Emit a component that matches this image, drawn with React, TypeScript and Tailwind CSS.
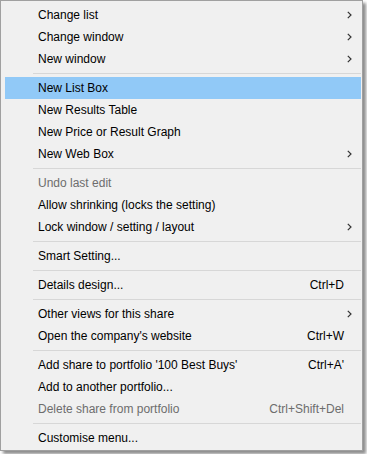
import React from "react";

type Item =
  | { sep: true }
  | { sep?: false; label: string; shortcut?: string; sub?: boolean; disabled?: boolean; active?: boolean };

const items: Item[] = [
  { label: "Change list", sub: true },
  { label: "Change window", sub: true },
  { label: "New window", sub: true },
  { sep: true },
  { label: "New List Box", active: true },
  { label: "New Results Table" },
  { label: "New Price or Result Graph" },
  { label: "New Web Box", sub: true },
  { sep: true },
  { label: "Undo last edit", disabled: true },
  { label: "Allow shrinking (locks the setting)" },
  { label: "Lock window / setting / layout", sub: true },
  { sep: true },
  { label: "Smart Setting..." },
  { sep: true },
  { label: "Details design...", shortcut: "Ctrl+D" },
  { sep: true },
  { label: "Other views for this share", sub: true },
  { label: "Open the company's website", shortcut: "Ctrl+W" },
  { sep: true },
  { label: "Add share to portfolio '100 Best Buys'", shortcut: "Ctrl+A'" },
  { label: "Add to another portfolio..." },
  { label: "Delete share from portfolio", shortcut: "Ctrl+Shift+Del", disabled: true },
  { sep: true },
  { label: "Customise menu..." },
];

function Chevron() {
  return (
    <svg width="5" height="8" viewBox="0 0 5 8" className="block">
      <path d="M0.8 0.8 L4 4 L0.8 7.2" fill="none" stroke="#333" strokeWidth="1.2" />
    </svg>
  );
}

export default function App() {
  return (
    <div className="w-[367px] h-[454px] bg-white relative">
      <div
        className="absolute left-0 top-0 w-[363px] h-[451px] border border-[#a0a0a0] bg-[#f0f0f0] pt-[3px] pl-[4px] pr-[1px] shadow-[3px_3px_3px_rgba(0,0,0,0.45)]"
        style={{ fontFamily: '"Segoe UI", "Liberation Sans", Arial, sans-serif' }}
      >
        {items.map((it, i) =>
          it.sep ? (
            <div key={i} className="h-[7px] flex items-center pl-[28px]">
              <div className="h-px w-full bg-[#d7d7d7]" />
            </div>
          ) : (
            <div
              key={i}
              className={
                "h-[22px] flex items-center pl-[33px] text-[12px] " +
                (it.active ? "bg-[#91c9f7] " : "") +
                (it.disabled ? "text-[#6d6d6d]" : "text-black")
              }
            >
              <span className="flex-1 whitespace-nowrap">{it.label}</span>
              {it.shortcut && <span className="whitespace-nowrap mr-[17px]">{it.shortcut}</span>}
              {it.sub && (
                <span className="mr-[9px]">
                  <Chevron />
                </span>
              )}
            </div>
          )
        )}
      </div>
    </div>
  );
}
